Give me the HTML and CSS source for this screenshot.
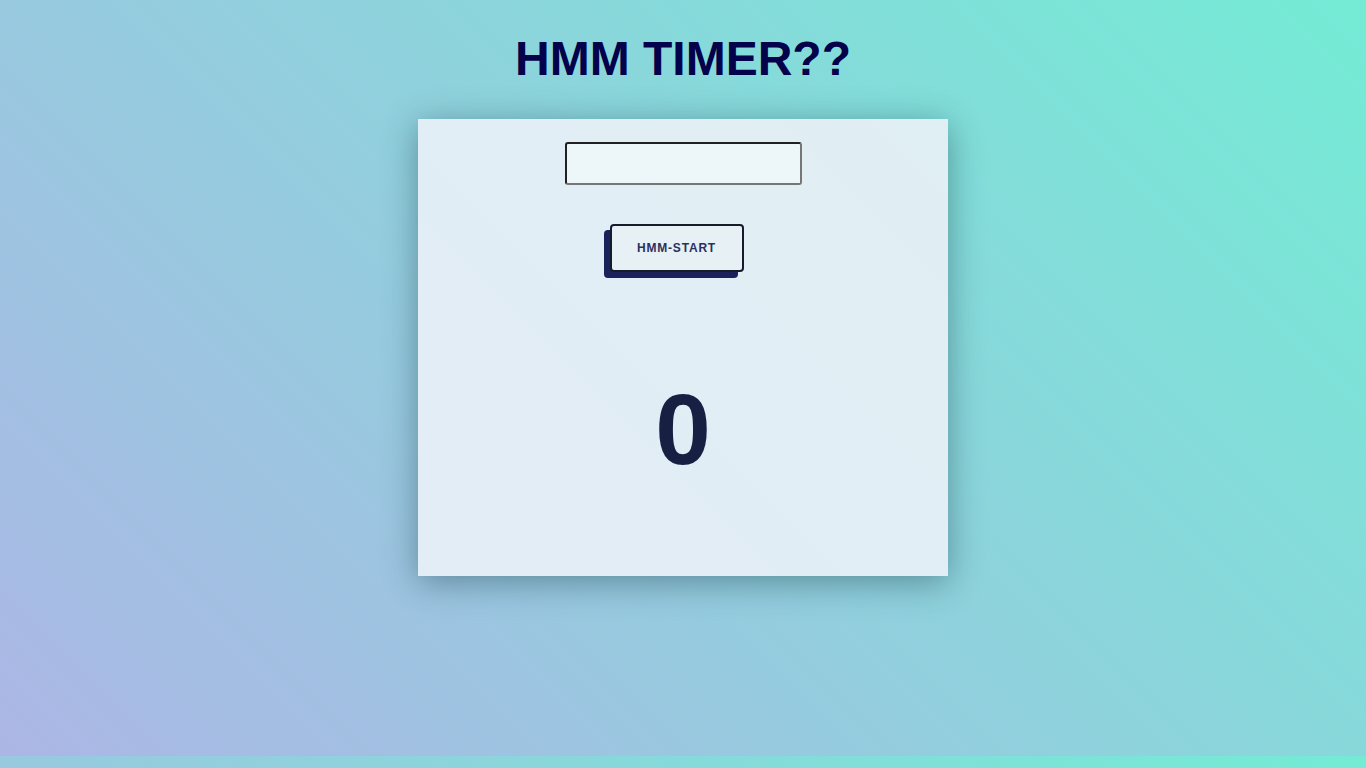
FILE: index.html
```html
<!DOCTYPE html>
<html lang="en">
<head>
<meta charset="utf-8">
<title>HMM TIMER??</title>
<link rel="stylesheet" href="styles.css">
</head>
<body>
  <h1 class="title">HMM TIMER??</h1>
  <main class="card">
    <input class="time-input" type="text" aria-label="seconds">
    <button class="start-btn" type="button">HMM-START</button>
    <div class="count">0</div>
  </main>
</body>
</html>
```

FILE: styles.css
```css
html {
  background: linear-gradient(45deg, #acb6e5, #74ebd5) 0 0 / 100% 756px repeat;
}
body {
  margin: 0;
  padding-bottom: 180px;
  font-family: "Liberation Sans", Arial, sans-serif;
  text-align: center;
}
.title {
  margin: 0;
  padding-top: 31px;
  height: 119px;
  box-sizing: border-box;
  font-size: 48px;
  line-height: 55px;
  font-weight: 700;
  color: #03024a;
}
.card {
  width: 530px;
  height: 457px;
  margin: 0 auto;
  box-sizing: border-box;
  padding-top: 23px;
  display: flex;
  flex-direction: column;
  align-items: center;
  background: rgba(232, 240, 246, 0.92);
  box-shadow: 0 6px 32px rgba(20, 60, 70, 0.45);
}
.time-input {
  width: 237px;
  height: 43px;
  box-sizing: border-box;
  margin: 0;
  padding: 0 8px;
  border: 2px inset #767676;
  border-radius: 3px;
  background: rgba(245, 252, 252, 0.6);
  font: 16px "Liberation Sans", Arial, sans-serif;
}
.start-btn {
  margin: 39px 0 0 -13px;
  width: 134px;
  height: 48px;
  box-sizing: border-box;
  border: 2px solid #161b2c;
  border-radius: 4px;
  background: #e6f0f5;
  box-shadow: -6px 6px 0 #19225a;
  color: #2a3060;
  font: 700 12px "Liberation Sans", Arial, sans-serif;
  letter-spacing: 0.8px;
}
.count {
  margin-top: 102px;
  font-size: 100px;
  line-height: 110px;
  font-weight: 700;
  color: #172042;
}
```
